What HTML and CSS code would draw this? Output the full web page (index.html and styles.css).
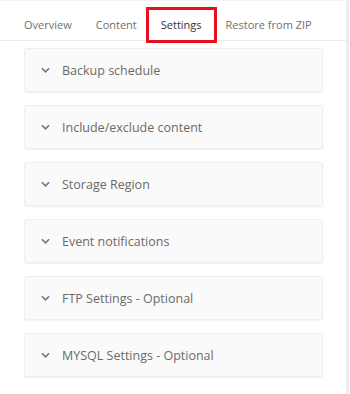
FILE: index.html
```html
<!DOCTYPE html>
<html lang="en">
<head>
    <meta charset="UTF-8">
    <meta name="viewport" content="width=device-width, initial-scale=1.0">
    <title>Backup Settings</title>
    <link rel="stylesheet" href="styles.css">
</head>
<body>
    <div class="page">
        <!-- Tabs -->
        <div class="tabs">
            <div class="tab">Overview</div>
            <div class="tab">Content</div>
            <div class="tab active">Settings</div>
            <div class="tab">Restore from ZIP</div>
        </div>

        <!-- Settings sections -->
        <div class="sections">
            <div class="section">
                <svg class="chevron" viewBox="0 0 10 6"><path d="M1 1l4 4 4-4"/></svg>
                <span>Backup schedule</span>
            </div>
            <div class="section">
                <svg class="chevron" viewBox="0 0 10 6"><path d="M1 1l4 4 4-4"/></svg>
                <span>Include/exclude content</span>
            </div>
            <div class="section">
                <svg class="chevron" viewBox="0 0 10 6"><path d="M1 1l4 4 4-4"/></svg>
                <span>Storage Region</span>
            </div>
            <div class="section">
                <svg class="chevron" viewBox="0 0 10 6"><path d="M1 1l4 4 4-4"/></svg>
                <span>Event notifications</span>
            </div>
            <div class="section">
                <svg class="chevron" viewBox="0 0 10 6"><path d="M1 1l4 4 4-4"/></svg>
                <span>FTP Settings - Optional</span>
            </div>
            <div class="section">
                <svg class="chevron" viewBox="0 0 10 6"><path d="M1 1l4 4 4-4"/></svg>
                <span>MYSQL Settings - Optional</span>
            </div>
        </div>
    </div>
</body>
</html>
```

FILE: styles.css
```css
body {
    font-family: "Open Sans", Arial, sans-serif;
    margin: 0;
    background-color: white;
    color: #666;
}
.page {
    width: 349px;
    height: 394px;
    border-right: 3px solid #eeeeee;
    border-top: 1px solid #f2f2f2;
    box-sizing: border-box;
    padding-top: 1px;
}
.tabs {
    display: flex;
    padding: 8px 0 0 12px;
    border-bottom: 1px solid #ebebeb;
}
.tab {
    padding: 0 12px;
    height: 30px;
    line-height: 30px;
    font-size: 11px;
    color: #6f6f6f;
}
.tab.active {
    color: #333;
    outline: 3px solid #e8101f;
}
.sections {
    display: flex;
    flex-direction: column;
    gap: 13px;
    padding: 7px 23px 0 24px;
}
.section {
    display: flex;
    align-items: center;
    gap: 12px;
    height: 44px;
    box-sizing: border-box;
    padding: 0 16px;
    background-color: #fafafa;
    border: 1px solid #eeeeee;
    border-radius: 3px;
    box-shadow: 0 1px 2px rgba(0,0,0,0.06);
    font-size: 12.5px;
    color: #6a6a6a;
}
.chevron {
    width: 9px;
    height: 6px;
    fill: none;
    stroke: #777;
    stroke-width: 1.8;
}
```
